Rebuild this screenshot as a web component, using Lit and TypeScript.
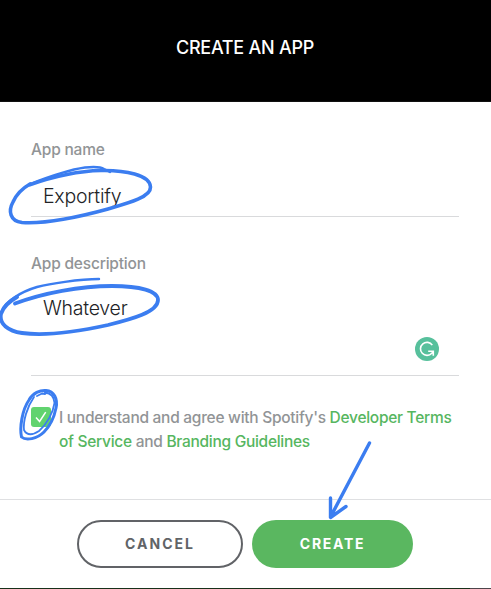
import { LitElement, html, css } from "lit";
import { customElement } from "lit/decorators.js";

@customElement("app-root")
export class AppRoot extends LitElement {
  static styles = css`
    :host { display: flex; flex-direction: column; position: relative; width: 491px; height: 589px; overflow: hidden; box-sizing: border-box; background: #fff; color: #919496; font-family: Inter, "Liberation Sans", sans-serif; }
    * { box-sizing: border-box; }
    header { height: 102px; flex: none; background: #000; color: #fff; display: flex; justify-content: center; padding: 36px 1px 0 0; font-size: 18px; line-height: 24px; font-weight: 500; letter-spacing: -0.25px; border-bottom: 1px solid #111; }
    main { height: 397px; flex: none; padding: 36px 32px 0 31px; display: flex; flex-direction: column; }
    .label { height: 24px; line-height: 24px; font-size: 15.5px; font-weight: 500; letter-spacing: -0.2px; white-space: nowrap; }
    .value { border-bottom: 1px solid #d9dadc; color: #222326; font-size: 19.5px; font-weight: 300; line-height: 24px; letter-spacing: -0.25px; padding: 22px 12px 0; }
    .name { height: 55px; margin-bottom: 35px; }
    .desc { height: 100px; padding-top: 20px; display: flex; justify-content: space-between; }
    .badge { margin: 41px 8px 0 0; width: 24px; height: 24px; }
    .agree { display: flex; gap: 8px; margin-top: 30px; font-size: 15.5px; font-weight: 500; line-height: 24px; letter-spacing: -0.28px; white-space: nowrap; }
    .check { width: 20px; height: 20px; margin-top: 1px; flex: none; }
    a { color: #56b660; }
    .row { display: block; }
    footer { flex: 1; border-top: 1px solid #dfe0e2; display: flex; justify-content: center; gap: 9px; padding: 20px 1px 0 0; }
    button { height: 48px; border-radius: 24px; font: 700 14px/20px Inter, sans-serif; padding: 0; letter-spacing: 2px; }
    .cancel { width: 166px; border: 2px solid #616367; background: #fff; color: #616467; }
    .create { width: 161px; border: 0; background: #5ab760; color: #fff; letter-spacing: 1.7px; }
    .edge { height: 1px; flex: none; background: linear-gradient(90deg, #17301a 470px, #4d454b 470px); }
    .ink { position: absolute; left: 0; top: 0; pointer-events: none; }
  `;
  render() {
    return html`
      <header><span>CREATE AN APP</span></header>
      <main>
        <div class="label">App name</div>
        <div class="value name">Exportify</div>
        <div class="label">App description</div>
        <div class="value desc"><span>Whatever</span>
          <svg class="badge" viewBox="0 0 24 24" fill="none" stroke="#fff" stroke-width="1.6"><circle cx="12" cy="12" r="12" fill="#57c09c" stroke="none"/><path d="M17.300 8.100A6.500 6.500 0 1 0 16.800 16.200L18.300 14.600M13.200 14.300H18.300V18.700"/></svg>
        </div>
        <div class="agree">
          <svg class="check" viewBox="0 0 20 20"><rect width="20" height="20" rx="3" fill="#61d36f"/><path d="M5 10.500L8.600 14.500L14.700 5.200" fill="none" stroke="#fff" stroke-width="1.5"/></svg>
          <div><span class="row">I understand and agree with Spotify's <a>Developer Terms</a></span><span class="row"><a>of Service</a> and <a>Branding Guidelines</a></span></div>
        </div>
      </main>
      <footer><button class="cancel">CANCEL</button><button class="create">CREATE</button></footer>
      <div class="edge"></div>
      <svg class="ink" width="491" height="589" fill="none" stroke="#3b7df0" stroke-linecap="round" stroke-linejoin="round">
        <path stroke-width="2.400" d="M29 184.500C48 177 67 170 85 167.500C94 166.500 101 167 104 169L110 172"/>
        <path stroke-width="3.600" d="M29 185C52 177 76 171 101 170.500C125 170 150 175 150.500 187C151 197 129 203 108 209C79 217 46 224 22 222.500C10 221 8 211 13 202C17 193 23 188 30 184"/>
        <path stroke-width="2.400" d="M99 279C79 279 49 284 37 287C20 292 5 302 2 311"/>
        <path stroke-width="3.800" d="M15 303.500C43 293 80 286 112 286C140 286 158 291 158 300C158 312 132 319 108 325C76 332 44 336 22 333C8 331 -1 324 1 314C3 307 10 301 17 297"/>
        <path stroke-width="3" d="M29 400C33 393 40 390 46 390.500C54 391 58 399 56 408C54 418 50 426 44 432C37 439 26 441 21.500 437C19.500 428 22 410 29 400Z"/>
        <path stroke-width="1.800" d="M34 397C27 407 23 421 24 430C27 436 33 435 39 431C47 424 53 413 54.500 403C54 396 50 393 45 392.500M37 396L42 393.500L45 394L47 392.500"/>
        <path stroke-width="3.400" d="M369.500 443L330.500 517M330.500 498V517.500L346 506.500"/>
      </svg>`;
  }
}
